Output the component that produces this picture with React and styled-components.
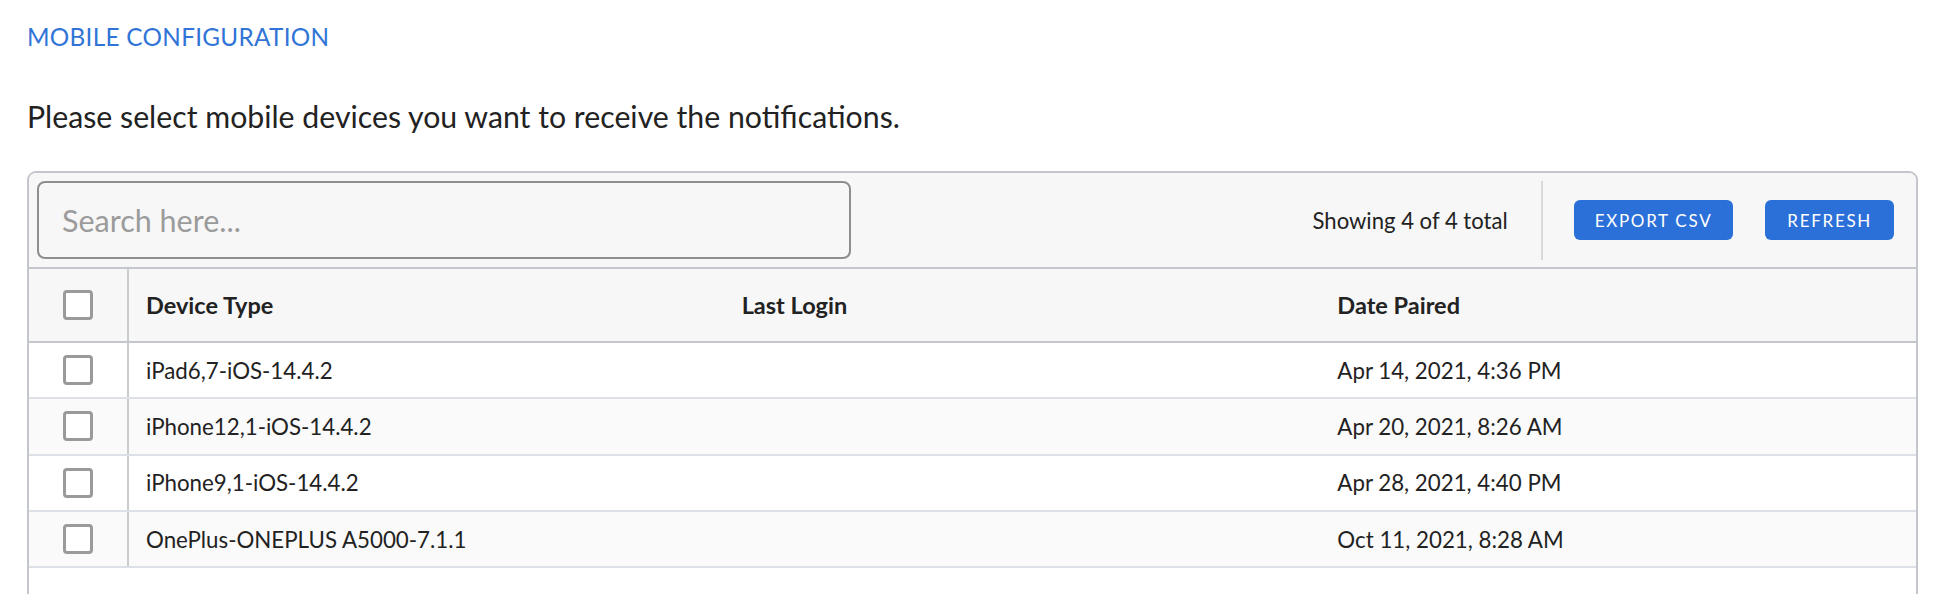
import React from 'react';
import styled, { createGlobalStyle } from 'styled-components';

const GlobalStyle = createGlobalStyle`
  body {
    margin: 0;
    background: #ffffff;
    font-family: Lato, "Open Sans", sans-serif;
    color: #222222;
  }
`;

const Page = styled.div`
  padding: 22px 20px 0 27px;
`;

const Title = styled.div`
  font-size: 24.3px;
  line-height: 30px;
  color: #3174d8;
  letter-spacing: 0.3px;
`;

const Intro = styled.p`
  margin: 47px 0 38px;
  font-size: 30.25px;
  line-height: 34px;
  color: #222222;
`;

const Panel = styled.div`
  border: 2px solid #c3c6cc;
  border-radius: 9px;
  overflow: hidden;
  padding-bottom: 40px;
`;

const Toolbar = styled.div`
  display: flex;
  align-items: center;
  height: 94px;
  padding: 0 22px 0 8px;
  background: #f7f7f7;
  border-bottom: 2px solid #c3c6cc;
`;

const Search = styled.input`
  width: 814px;
  height: 78px;
  box-sizing: border-box;
  border: 2px solid #8e8e8e;
  border-radius: 8px;
  background: transparent;
  padding: 0 23px;
  font-family: inherit;
  font-size: 30.5px;
  color: #222222;
  outline: none;

  &::placeholder {
    color: #9b9b9b;
  }
`;

const Spacer = styled.div`
  flex: 1;
`;

const Count = styled.span`
  font-size: 22.1px;
  color: #222222;
`;

const Divider = styled.div`
  width: 2px;
  height: 79px;
  background: #d9d9d9;
  margin: 0 31px 0 33px;
`;

const Button = styled.button`
  height: 40px;
  padding: 0 ${({ $pad }) => $pad}px;
  margin-left: ${({ $gap }) => $gap || 0}px;
  border: none;
  border-radius: 6px;
  background: #2b70d8;
  color: #ffffff;
  font-family: inherit;
  font-size: 17px;
  letter-spacing: 1.7px;
`;

const Row = styled.div`
  display: grid;
  grid-template-columns: 100px 1fr 1fr 1fr;
  height: ${({ $head }) => ($head ? 74 : 56.3)}px;
  background: ${({ $head, $shade }) => ($head ? '#f7f7f7' : $shade ? '#fafafa' : '#ffffff')};
  border-bottom: 2px solid ${({ $head }) => ($head ? '#c3c6cc' : '#dde0e6')};
  box-sizing: border-box;
`;

const BoxCell = styled.div`
  display: flex;
  align-items: center;
  justify-content: center;
  border-right: 2px solid #c8cbd0;
`;

const Cell = styled.div`
  display: flex;
  align-items: center;
  padding-left: 17px;
  font-size: ${({ $head }) => ($head ? 23.5 : 22.3)}px;
  font-weight: ${({ $head }) => ($head ? 700 : 400)};
  color: #222222;
`;

const Check = styled.span`
  width: 30px;
  height: 30px;
  box-sizing: border-box;
  border: 3px solid #9a9a9a;
  border-radius: 4px;
  background: #ffffff;
`;

const devices = [
  { type: 'iPad6,7-iOS-14.4.2', paired: 'Apr 14, 2021, 4:36 PM' },
  { type: 'iPhone12,1-iOS-14.4.2', paired: 'Apr 20, 2021, 8:26 AM' },
  { type: 'iPhone9,1-iOS-14.4.2', paired: 'Apr 28, 2021, 4:40 PM' },
  { type: 'OnePlus-ONEPLUS A5000-7.1.1', paired: 'Oct 11, 2021, 8:28 AM' },
];

export default function App() {
  return (
    <>
      <GlobalStyle />
      <Page>
        <Title>MOBILE CONFIGURATION</Title>
        <Intro>Please select mobile devices you want to receive the notifications.</Intro>
        <Panel>
          <Toolbar>
            <Search placeholder="Search here..." />
            <Spacer />
            <Count>Showing 4 of 4 total</Count>
            <Divider />
            <Button $pad={21}>EXPORT CSV</Button>
            <Button $pad={22} $gap={32}>REFRESH</Button>
          </Toolbar>
          <Row $head>
            <BoxCell><Check /></BoxCell>
            <Cell $head>Device Type</Cell>
            <Cell $head>Last Login</Cell>
            <Cell $head>Date Paired</Cell>
          </Row>
          {devices.map((d, i) => (
            <Row key={d.type} $shade={i % 2 === 1}>
              <BoxCell><Check /></BoxCell>
              <Cell>{d.type}</Cell>
              <Cell />
              <Cell>{d.paired}</Cell>
            </Row>
          ))}
        </Panel>
      </Page>
    </>
  );
}
